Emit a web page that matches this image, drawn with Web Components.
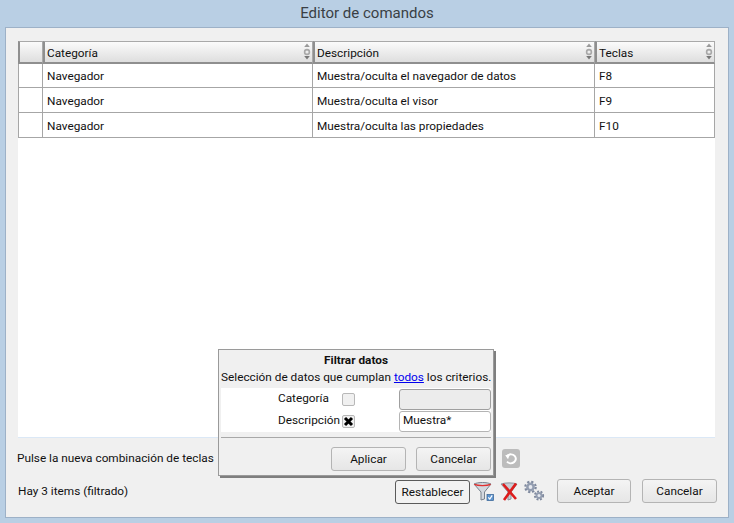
<!DOCTYPE html>
<html lang="es"><head><meta charset="utf-8"><title>Editor de comandos</title>
<style>
html,body{margin:0;padding:0;height:100%}
body{font:11.8px/16px Roboto,"Noto Sans",sans-serif;color:#111;background:#b9cfe4}
</style></head><body>
<template id="btn-t"><style>
:host{display:inline-flex;align-items:center;justify-content:center;box-sizing:border-box;height:24px;border:1px solid #b4b4b4;border-radius:3px;background:linear-gradient(#f4f4f4,#e6e6e6);color:#111;font-size:11.8px}
:host([default]){border-color:#5a5a5a;background:#f2f2f2}
</style><slot></slot></template>
<template id="grid-t"><style>
:host{display:block;height:396px;background:#fff;box-shadow:0 1px 0 #dbe8f6;overflow:hidden}
.g{display:grid;grid-template-columns:25px 270px 282px 120px;grid-template-rows:23px 24px 25px 25px}
</style><div class="g" part="g"><slot></slot></div></template>
<template id="hd-t"><style>
:host{display:flex;align-items:center;box-sizing:border-box;height:23px;padding:1px 0 0 2px;background:linear-gradient(#fbfbfb,#dedede);border:1px solid #a9a9a9;border-left:2px solid #8f8f8f;border-bottom:2px solid #8f8f8f;justify-content:space-between}
svg{width:8px;height:18px;margin:-1px 1px 0 0;flex:none}
</style><span><slot></slot></span><svg viewBox="0 0 8 18"><path d="M4 0.5 6.8 4H1.2z" fill="#9a9a9a"/><circle cx="4" cy="9" r="2.4" fill="none" stroke="#a8a8a8" stroke-width="1.6"/><path d="M4 16.5 6.8 13H1.2z" fill="#777"/></svg></template>
<template id="cell-t"><style>
:host{display:flex;align-items:center;box-sizing:border-box;padding:2px 0 0 4px;border-right:1px solid #a6a6a6;border-bottom:1px solid #a6a6a6;white-space:nowrap}
:host([first]){border-left:1px solid #a6a6a6}
:host([top]){padding-top:1px}
</style><slot></slot></template>
<template id="popup-t"><style>
:host{position:absolute;left:218px;top:349px;width:276px;height:127px;box-sizing:border-box;background:#f0f0f0;border:1px solid #9a9a9a;box-shadow:2px 2px 0 #7f7f7f;display:flex;flex-direction:column;align-items:stretch;padding:0 2px}
h2{margin:2px 0 0;font-size:11.8px;line-height:16px;font-weight:700;text-align:center}
p{margin:1px 0 0;line-height:16px;text-align:center;white-space:nowrap}
a{color:#00e;text-decoration:underline}
.f{background:#fff;margin:3px 0 0 0;height:44px;display:grid;grid-template-columns:121px 13px 1fr;grid-template-rows:22px 22px}
.f .l{padding-left:57px;align-self:center;white-space:nowrap;width:0;margin-top:-3px}
.c{width:13px;height:13px;box-sizing:border-box;border:1px solid #b8b8b8;border-radius:2px;background:#f0f0f0;align-self:center;display:flex;align-items:center;justify-content:center}
.c svg{width:11px;height:11px}
.i{box-sizing:border-box;height:21px;border:1px solid #b4b4b4;border-radius:3px;padding:0 3px;line-height:17px;background:#fff;align-self:center;margin-left:44px;width:92px}
.i.d{background:#ececec;border:1px solid #9f9f9f}
hr{border:0;border-top:1px solid #a8a8a8;margin:5px 0 0;height:0}
.a{display:flex;justify-content:flex-end;gap:10px;margin-top:9px}
x-btn{width:75px}
</style><h2><slot name="title"></slot></h2><p>Selección de datos que cumplan <a href="#">todos</a> los criterios.</p>
<div class="f">
<span class="l">Categoría</span><span class="c"></span><span class="i d"></span>
<span class="l">Descripción</span><span class="c"><svg viewBox="0 0 11 11"><path d="M2 2 9 9M9 2 2 9" stroke="#000" stroke-width="3"/></svg></span><span class="i">Muestra*</span>
</div><hr><div class="a"><x-btn>Aplicar</x-btn><x-btn>Cancelar</x-btn></div></template>
<template id="win-t"><style>
:host{display:flex;flex-direction:column;width:734px;height:523px;overflow:hidden;position:relative;box-sizing:border-box;padding:0 5px 5px 5px}
.t{height:27px;text-align:center;font:15px/27px Roboto,sans-serif;color:#3a3f45;flex:none}
.p{flex:1;box-sizing:border-box;border:1px solid #9db1c7;background:#f0f0f0;padding:13px 11px 0 12px;display:flex;flex-direction:column}
::slotted(x-grid){margin-right:2px}
.p1{height:42px;display:flex;align-items:center;flex:none}
.p1 span.lb{margin-left:-1px;width:485px}
.und{width:18px;height:19px;border-radius:3px;background:#bcbcbc;display:flex;align-items:center;justify-content:center}
.p2{display:flex;align-items:center;height:24px;flex:none}
.p2 .s{flex:none;width:377px}
.p2 x-btn.r{width:75px;margin-top:2px}
.ic{display:flex;flex:none;align-items:center;margin-top:1px}
.acts{display:flex;gap:11px;margin-left:auto}
x-btn.n{width:74px}
</style><div class="t"><slot name="title"></slot></div><div class="p"><slot name="grid"></slot>
<div class="p1"><span class="lb">Pulse la nueva combinación de teclas</span><span class="und"><svg width="14" height="13" viewBox="0 0 14 13"><path d="M3.6 3.4A5 4.4 0 1 1 3 9.6" fill="none" stroke="#fff" stroke-width="2"/><path d="M6 2.2 1.2 3.2 4 7.2z" fill="#fff"/></svg></span></div>
<div class="p2"><span class="s">Hay 3 items (filtrado)</span><x-btn class="r" default>Restablecer</x-btn>
<span class="ic"><svg width="24" height="24" viewBox="0 0 24 24" style="margin-left:2px"><path d="M2 4C6 2 15 2 19 4L12.5 12V19L9 20V12z" fill="#d3d8df" stroke="#78828d"/><path d="M2.4 4.4C6 6 15 6 18.6 4.4" fill="none" stroke="#e03030" stroke-width="1.4"/><rect x="15" y="14.5" width="6.5" height="6" fill="#5f95cf" stroke="#2f5f92" stroke-width=".7"/><path d="M16.2 17.4 17.8 19 20.2 15.4" fill="none" stroke="#fff" stroke-width="1.2"/></svg>
<svg width="22" height="24" viewBox="0 0 22 24" style="margin-left:3px"><path d="M2 4C6 2.5 14 2.5 18 4L12 12V19L9 20V12z" fill="#c9cdd3" stroke="#8b949e"/><path d="M4 4 17 19M17 3.5 5 20" stroke="#dd1c1c" stroke-width="2.6"/></svg>
<svg width="24" height="24" viewBox="0 0 24 24" style="margin-left:2px"><g fill="none" stroke="#7f899e"><circle cx="7.5" cy="7" r="5.2" stroke-width="2.2" stroke-dasharray="2.2 1.9"/><circle cx="16" cy="15.5" r="4.1" stroke-width="2" stroke-dasharray="1.9 1.5"/></g><circle cx="7.5" cy="7" r="4.4" fill="#939db0"/><circle cx="16" cy="15.5" r="3.4" fill="#939db0"/><circle cx="7.5" cy="7" r="1.9" fill="#e6e9ef"/><circle cx="16" cy="15.5" r="1.5" fill="#e6e9ef"/></svg></span>
<span class="acts"><x-btn class="n">Aceptar</x-btn><x-btn class="n" style="width:75px">Cancelar</x-btn></span></div>
</div><slot name="popup"></slot></template>
<x-window>
<span slot="title">Editor de comandos</span>
<x-grid slot="grid">
<x-hd noarrow></x-hd><x-hd>Categoría</x-hd><x-hd>Descripción</x-hd><x-hd>Teclas</x-hd>
<x-cell first top></x-cell><x-cell top>Navegador</x-cell><x-cell top>Muestra/oculta el navegador de datos</x-cell><x-cell top>F8</x-cell>
<x-cell first></x-cell><x-cell>Navegador</x-cell><x-cell>Muestra/oculta el visor</x-cell><x-cell>F9</x-cell>
<x-cell first></x-cell><x-cell>Navegador</x-cell><x-cell>Muestra/oculta las propiedades</x-cell><x-cell>F10</x-cell>
</x-grid>
<x-popup slot="popup"><span slot="title">Filtrar datos</span></x-popup>
</x-window>
<script>
function def(n,t,fn){customElements.define(n,class extends HTMLElement{constructor(){super();const s=this.attachShadow({mode:"open"});s.appendChild(document.getElementById(t).content.cloneNode(true));}connectedCallback(){if(fn)fn(this)}})}
def("x-btn","btn-t");def("x-grid","grid-t");
def("x-hd","hd-t",e=>{if(e.hasAttribute("noarrow"))e.shadowRoot.querySelector("svg").style.display="none"});
def("x-cell","cell-t");def("x-popup","popup-t");def("x-window","win-t");
</script></body></html>
